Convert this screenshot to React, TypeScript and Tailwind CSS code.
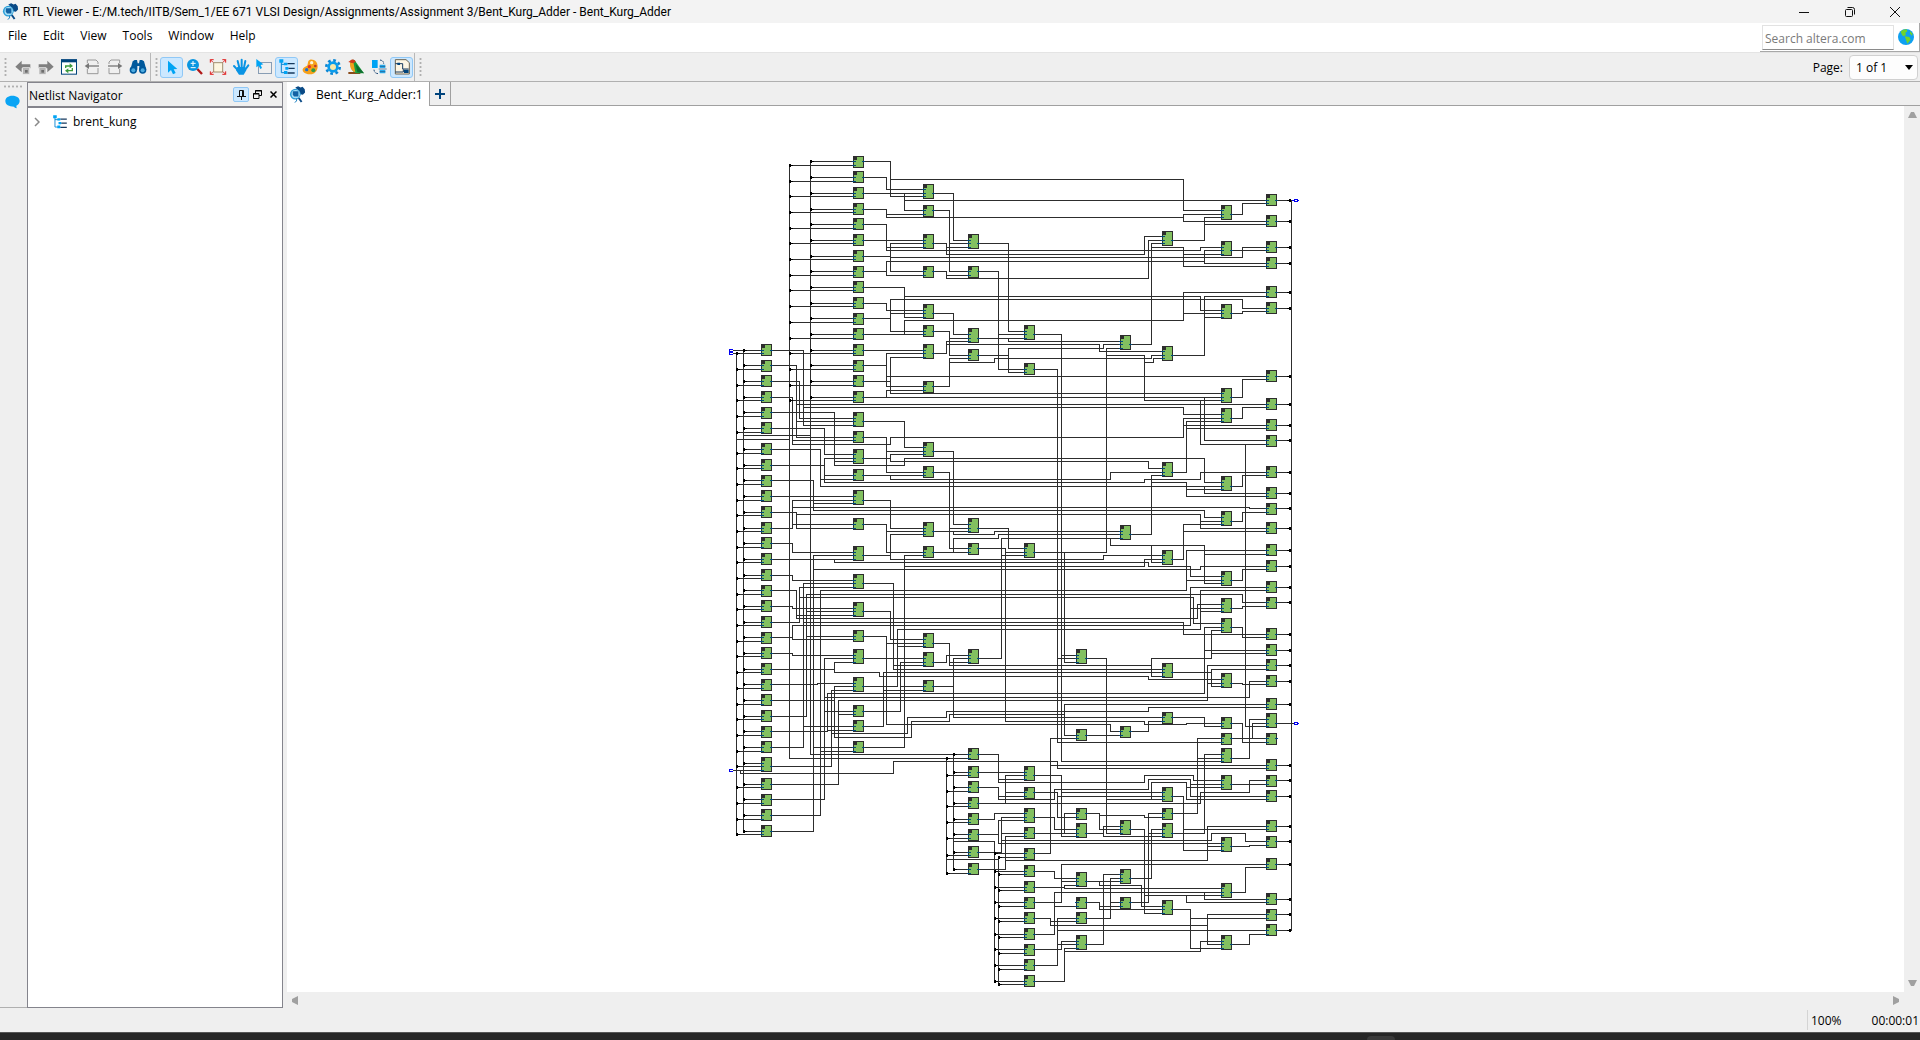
import React from "react";

/* ------------------------------------------------------------------ */
/* Netlist geometry                                                     */
/* Coordinates are in thirds of a pixel, local to a tile of the sheet. */
/* ------------------------------------------------------------------ */

type Tile = { x: number; y: number; wires: string; gates: [number, number[][]][] };

const TILES: Tile[] = [
  {
    x: 0,
    y: 0,
    wires: `M39 631H71 M39 640H50 M71 631V2074 M50 640V2083 M271 64V1843H744 M208 76V1855H744
M431 64H511V169H609 M511 118H900 M431 112H499V148H609 M431 160H609 M553 160V211H609 M553 181H900
M431 208H499V232H900 M499 223H609 M431 253H499V331H900 M499 322H609 M431 301H609 M431 349H511
M511 310V394H609 M511 310H609 M511 352H900 M431 394H499 M499 364V406H609 M499 364H900
M431 442H553V532H609 M553 469H900 M431 490H499V511H609 M431 535H511 M511 478V574H609 M511 478H900
M511 520H609 M431 583H609 M553 583V541H900 M431 631H609 M431 676H499 M499 640H609 M499 640V739H609
M499 709H900 M431 724H511 M511 652H609 M511 652V760H900 M431 772H900 M499 772V751H609
M641 160H701V301H744 M641 211H689V394H744 M689 310H744 M641 310H680V343H900 M680 322H744
M641 394H680V415H900 M680 406H744 M641 520H701V583H744 M641 574H689V646H744 M689 595H744
M641 640H680V604H744 M680 613H900 M641 739H689V655H744 M689 667H824V655H900
M776 310H866V574H900 M776 394H836V688H900 M836 583H900 M776 595H900 M866 595V604H900
M776 646H866 M866 625V697H900 M866 625H900
M155 631H250V856H399 M250 802H900 M155 676H229V892H399 M229 844H399 M229 793H900
M155 724H238V835H399 M155 772H217V913`,
    gates: [
      [123, [[612, 631, 640], [660, 676, 688], [705, 724, 736], [753, 772, 781]]],
      [399, [[48, 64, 76], [93, 112, 124], [141, 160, 169], [189, 208, 217], [234, 253, 265], [282, 301, 310], [330, 349, 358], [378, 394, 406], [423, 442, 451], [471, 490, 499], [519, 535, 547], [564, 583, 595], [612, 631, 640], [660, 676, 688], [705, 724, 736], [753, 772, 781]]],
      [609, [[132, 148, 160, 169], [195, 211, 223], [282, 301, 310, 322], [378, 394, 406], [492, 511, 520, 532], [555, 574, 583], [612, 631, 640, 652], [723, 739, 751]]],
      [744, [[282, 301, 310, 322], [378, 394, 406], [564, 583, 595, 604], [627, 646, 655]]],
    ],
  },
  {
    x: 300,
    y: 0,
    wires: `M814 181V2371 M0 118H490V211H603 M0 181H738 M0 232H490 M490 223H603 M490 223V244H738
M0 331H541V322H603 M0 343H373V289H426 M0 352H667V322H738 M0 364H553 M553 331H603 M553 331V370H738
M0 415H385V301H426 M0 469H541V511H603 M0 478H667V505H738 M0 541H490V457H738 M490 520H603
M0 574H12 M0 583H12 M0 595H12 M0 604H300 M0 613H238V634H426 M0 625H250V613H300 M0 655H394V646H426
M0 709H738 M0 760H603 M0 772H603 M0 793H738 M0 802H490V823H603 M0 688H12 M0 697H12
M44 583H124V1864H603 M44 688H112V1807H603 M332 613H394V310H426 M394 322H490V379H738 M490 343H603
M458 301H553V232H603 M553 253H738 M458 646H553V469H738 M553 532H603 M635 223H667V190H738
M635 331H738 M635 520H667V514H738 M635 772H667V718H738 M635 835H667V802H738
M300 625H259V1237H44 M259 646H373V781H603 M373 667H400V655H426 M541 781V913H738 M553 772V901H738`,
    gates: [
      [12, [[555, 574, 583, 595], [669, 688, 697]]],
      [300, [[585, 604, 613, 625]]],
      [426, [[273, 289, 301, 310], [618, 634, 646, 655]]],
      [603, [[195, 211, 223, 232], [303, 322, 331, 343], [492, 511, 520, 532], [744, 760, 772, 781]]],
      [738, [[162, 181, 190], [225, 244, 253], [303, 322, 331], [351, 370, 379], [438, 457, 469], [486, 505, 514], [690, 709, 718], [774, 793, 802]]],
    ],
  },
  {
    x: 0,
    y: 260,
    wires: `M217 121H399 M217 133H511V112H900 M155 37H343V196H553V175H900 M343 184H399 M155 85H313V163H399
M71 106H271 M50 118H208 M155 148H301V259H900 M301 238H399 M155 196H313 M313 175H399 M313 175V247H900
M313 226H399 M155 241H280V331H900 M280 310H399 M155 289H399 M155 337H229V385H399 M229 343H900
M155 385H217V301H399 M217 322H900 M217 373H399 M155 430H217V457H399 M155 478H399 M343 478V487H900
M155 526H217V541H399 M155 571H229V655H900 M229 646H399 M155 619H217V625H399 M155 667H238V562H399
M238 592H900 M155 712H217 M217 718H399 M217 718V676H900 M155 760H217V766H399
M155 808H343V787H399 M343 808V817H478V829H900 M155 853H292V850H399 M259 634H399 M259 709H399
M250 667H900 M313 892H900 M280 508H900
M431 64H553V142H609 M431 112H499V217H609 M499 154H609 M431 175H511 M511 163H609 M511 163V184H900
M431 226H609 M511 226V238H900 M431 301H511V385H609 M431 373H499V457H609 M499 394H609
M431 466H511 M511 403H609 M511 403V478H900 M431 550H520V808H900 M520 796H609 M431 634H511V718H609
M431 709H499V973H900 M499 730H609 M431 775H609 M431 859H532V688H900 M532 739H609 M553 499H900
M641 154H701V373H744 M641 217H689V445H744 M689 385H744 M641 394H744 M701 394V403H824V394H900
M641 457H744 M701 457V415H836V403H900 M641 730H689V796H900 M689 787H744 M641 787H680V766H744
M641 859H701 M744 775H701V952H900 M776 385H866V445H900 M776 445H857V964H900 M857 457H900
M776 775H845V415H900 M845 466H900`,
    gates: [
      [123, [[21, 37, 49], [66, 85, 97], [129, 148, 160], [177, 196, 205], [225, 241, 253], [270, 289, 301], [318, 337, 346], [366, 385, 394], [411, 430, 442], [459, 478, 487], [507, 526, 535], [555, 571, 583], [600, 619, 628], [648, 667, 676], [696, 712, 724], [741, 760, 769], [789, 808, 817], [837, 853, 865]]],
      [399, [[36, 55, 64, 76], [93, 112, 121], [147, 163, 175, 184], [207, 226, 238], [270, 289, 301, 310], [354, 373, 385], [438, 457, 466, 478], [522, 541, 550, 562], [606, 625, 634, 646], [690, 709, 718], [747, 766, 775, 787], [831, 850, 859, 871]]],
      [609, [[126, 142, 154, 163], [198, 217, 226], [366, 385, 394, 403], [438, 457, 466], [699, 718, 730, 739], [756, 775, 787, 796], [840, 859, 871]]],
      [744, [[354, 373, 385, 394], [429, 445, 457], [747, 766, 775, 787]]],
    ],
  },
  {
    x: 300,
    y: 260,
    wires: `M0 112H490V55H603 M490 76H738 M458 217H499V64H603 M499 85H738
M0 175H553V247H603 M0 184H385V205H426 M0 238H271V217H426 M0 247H373V238H541V217H738 M0 259H603
M553 259V280H738 M0 322H689V325H738 M0 331H553V352H603 M0 343H541V385H738 M541 364H603 M0 394H300
M0 403H300 M0 415H300 M271 415V436H553V550H603 M553 463H738 M394 436V487H426 M332 403H394V226H426
M394 247H499V289H738 M499 268H603 M0 445H12 M0 457H12 M0 466H12 M133 457V787H168 M124 766H168
M112 775H168 M0 478H250V466H426 M0 487H385V499H511V529H603 M0 499H373V478H426 M0 508H541V499H738
M458 478H490V373H603 M490 394H738 M0 571H499V451H738 M499 541H603 M0 583H667V607H738
M0 592H520V670H603 M0 655H532V613H603 M0 667H490V703H738 M0 676H511V562H738 M511 625H603
M0 688H541V571H738 M541 634H603 M635 259H667V226H738 M635 364H667V337H738 M635 541H667V508H738
M635 625H667V619H738 M635 682H667V712H738 M635 850H667V853H738 M201 775H259V1300H300
M0 796H394 M426 829H394V775H574V691H603 M574 760H738 M0 808H426 M0 817H426 M0 829H385V838H603
M458 817H574 M738 808H574V859H603 M0 880H553V682H603 M553 751H738 M0 892H689V844H738
M676 133V979H738`,
    gates: [
      [12, [[429, 445, 457, 466]]],
      [168, [[747, 766, 775, 787]]],
      [300, [[375, 394, 403, 415]]],
      [426, [[186, 205, 217, 226], [450, 466, 478, 487], [789, 808, 817, 829]]],
      [603, [[24, 43, 55, 64], [228, 247, 259, 268], [333, 352, 364, 373], [513, 529, 541, 550], [594, 613, 625, 634], [654, 670, 682, 691], [819, 838, 850, 859]]],
      [738, [[57, 76, 85], [105, 121, 133], [198, 217, 226], [261, 280, 289], [309, 325, 337], [366, 385, 394], [432, 451, 463], [480, 499, 508], [543, 562, 571], [591, 607, 619], [684, 703, 712], [732, 751, 760], [777, 796, 808], [825, 844, 853]]],
    ],
  },
  {
    x: 0,
    y: 520,
    wires: `M155 121H343V79H399 M343 121V232H574V184H689V163H900 M155 169H259V-197H900
M155 214H322V100H900 M322 211H399 M155 262H250V-230H399 M250 199H399 M155 319H334V91H399
M334 220H562V172H680V154H900 M155 373H355V121H900 M355 163H399 M155 418H313V-5H399 M313 154H399
M155 466H301V-209H900 M301 274H399 M155 514H280V-314H399 M280 262H399
M431 154H541V7H609 M541 79H609 M431 199H490V37H900 M490 91H609 M431 262H553V-314H609
M39 331H123 M61 331V340H520V304H900 M701 283V628 M680 295V640 M701 544H824V964 M680 598H836
M836 592V973 M776 283H836V367H900 M836 358H900 M776 337H900 M776 382H836V418H900 M836 409H900
M776 430H900 M857 430V346H900 M857 397H900 M776 478H824V460H900 M776 523H836 M900 481H836V550H900
M776 577H845V472H900 M845 520H900 M845 541H900 M776 628H857V529H900 M857 601H900`,
    gates: [
      [123, [[102, 121, 133], [150, 169, 178], [198, 214, 226], [243, 262, 274], [291, 310, 319, 331], [354, 373, 382], [402, 418, 430], [447, 466, 478], [495, 514, 523]]],
      [399, [[135, 154, 163], [180, 199, 211], [243, 262, 274]]],
      [744, [[264, 283, 295], [318, 337, 346], [363, 382, 394], [411, 430, 439], [459, 478, 487], [507, 523, 535], [558, 577, 586], [609, 628, 640]]],
    ],
  },
  {
    x: 300,
    y: 520,
    wires: `M0 121H562V16H738 M562 70H603 M0 154H385V142H738 M0 163H133 M738 133H133V226H168 M0 172H426
M0 184H373V193H499V190H603 M0 193H271V214H300 M201 226H300 M332 214H385V184H426
M458 172H553V199H603 M635 190H667V247H738 M635 235H738 M697 235V190H738 M635 295H689V178H738
M0 304H112V325H738 M91 316H738 M168 235H91V580H44 M603 235H532V460H458 M532 295H603
M603 283H553V520H458 M0 337H12 M0 346H12 M0 358H12 M0 397H12 M0 409H12 M0 460H12 M0 472H12
M0 481H12 M0 520H12 M0 529H12 M44 346H124V529H168 M124 397H426 M0 367H373V346H520V361H603
M0 418H103V388H385V358H511V409H738 M511 373H603 M0 430H541V397H689V361H738
M44 397H112V472H168 M112 409H426 M394 418V367H499V418H738 M499 382H603 M259 418H426 M635 373H738
M458 409H490V571H603 M490 508H738 M44 472H103V508H168 M44 520H168 M133 520V460H168
M201 460H238V508H300 M238 466H373V472H426 M201 520H250 M300 499H250V529H426
M332 508H373V760H426 M373 706H603 M426 460H385V727H332 M385 520H426 M426 508H394V655H332
M0 541H574V520H676V544H738 M0 550H603 M0 601H562V499H738 M562 559H603 M635 559H689V556H738
M499 706V727H738 M44 634H103V655H168 M738 613H124V727H44 M124 664H168 M44 682H133
M168 676H133V685H603 M603 697H103V823H44 M103 739H168 M553 697V718H738
M44 775H91V796H562 M91 784H168 M738 763H562V853H603 M201 664H300 M238 664V676H364V739H426
M300 643H250V853H201 M300 655H271V775H201 M271 727H300 M201 727H238V748H426 M238 739H300
M168 775H112V916H44 M112 811H738 M112 853H168 M44 868H124V844H168 M44 964H133V865H168
M133 874H541V844H603 M635 697H676V622H738 M458 748H511V865H603 M511 775H738 M635 853H689V823H738
M770 190H822`,
    gates: [
      [12, [[318, 337, 346, 358], [381, 397, 409], [444, 460, 472, 481], [501, 520, 529], [564, 580, 592], [615, 634, 643], [663, 682, 691], [711, 727, 739], [756, 775, 784], [804, 823, 832], [852, 868, 880], [897, 916, 928], [945, 964, 973]]],
      [168, [[207, 226, 235], [444, 460, 472], [489, 508, 520, 529], [636, 655, 664, 676], [711, 727, 739], [756, 775, 784], [825, 844, 853, 865]]],
      [300, [[198, 214, 226], [480, 499, 508, 520], [627, 643, 655, 664], [711, 727, 739]]],
      [426, [[156, 172, 184], [381, 397, 409, 418], [444, 460, 472], [489, 508, 520, 529], [720, 739, 748, 760]]],
      [603, [[171, 190, 199], [219, 235, 247], [264, 283, 295, 304], [345, 361, 373, 382], [531, 550, 559, 571], [669, 685, 697, 706], [825, 844, 853, 865]]],
      [738, [[114, 133, 142], [159, 178, 190, 199], [219, 235, 247], [297, 316, 325], [345, 361, 373], [390, 409, 418], [480, 499, 508], [528, 544, 556], [594, 613, 622], [699, 718, 727], [747, 763, 775], [792, 811, 823]]],
    ],
  },
];

const px = (v: number) => Math.floor(v / 3);

const toPath = (t: Tile) =>
  t.wires.replace(/([MHV])(-?\d+)(?: (\d+))?/g, (_m, c: string, a: string, b?: string) => {
    if (c === "M") return `M${t.x + px(+a) + 0.5} ${t.y + px(+b!) + 0.5}`;
    if (c === "H") return `H${t.x + px(+a) + 0.5}`;
    return `V${t.y + px(+a) + 0.5}`;
  });

type Gate = { x: number; y: number; h: number; ins: number[]; out: number };
type Tap = { bus: number; y: number; to: number };

const gates: Gate[] = [];
const taps: Tap[] = [];
const outTaps: number[] = [];

TILES.forEach((t) =>
  t.gates.forEach(([gx, rows]) =>
    rows.forEach(([top, ...raw]) => {
      const x = t.x + px(gx);
      const y = t.y + px(top);
      const ins = raw.map((v) => t.y + px(v));
      gates.push({ x, y, h: ins.length === 3 ? 15 : 12, ins, out: ins.length === 3 ? ins[1] : ins[0] });
      const feed = (a: number, b: number) => {
        taps.push({ bus: a, y: ins[0], to: x });
        taps.push({ bus: b, y: ins[1], to: x });
      };
      if (x === 41) feed(23, 16);
      if (x === 133 && y < 255) feed(90, 69);
      if (x === 248 && y > 600) feed(233, 226);
      if (x === 304 && y > 705) feed(274, 278);
      if (x === 546 && ins.length === 2 && y !== 593) outTaps.push(ins[0]);
    }),
  ),
);

function Schematic() {
  return (
    <svg width="600" height="850" viewBox="0 0 600 850" shapeRendering="crispEdges" role="img" aria-label="brent_kung schematic">
      {TILES.map((t, i) => (
        <path key={i} d={toPath(t)} fill="none" stroke="#2d2d2d" strokeLinecap="square" />
      ))}
      {taps.map((t, i) => (
        <g key={i}>
          <path d={`M${t.bus} ${t.y + 0.5}H${t.to}`} stroke="#2d2d2d" />
          <path d={`M${t.bus} ${t.y - 1}h2v1h2v1h-2v1h-2z`} fill="#000" />
        </g>
      ))}
      {outTaps.map((y) => (
        <g key={y}>
          <path d={`M557 ${y + 0.5}H571`} stroke="#2d2d2d" />
          <path d={`M567 ${y}h2v-1h2v3h-2v-1h-2z`} fill="#000" />
        </g>
      ))}
      {gates.map((g, i) => (
        <g key={i}>
          <rect x={g.x + 0.5} y={g.y + 0.5} width={10} height={g.h - 1} fill="#82c060" stroke="#2d2d2d" />
          <rect x={g.x} y={g.y} width={4} height={4} fill="#2d2d2d" />
          {g.ins.map((y) => (
            <rect key={y} x={g.x - 1} y={y} width={4} height={1} fill="#004a7c" />
          ))}
          <rect x={g.x + 9} y={g.out} width={3} height={1} fill="#004a7c" />
        </g>
      ))}
      <g fill="none" stroke="#0000f0">
        <path d="M13 209.500H9.500V211.500H13M13 212.500H9.500V214.500H13M9 212H12" />
        <path d="M13 629.500H9.500V631.500H13" />
        <path d="M572 60.500h2M574.500 59.500h3v2h-3zM577 60.500h2" />
        <path d="M574.500 582.500h3v2h-3zM577 583.500h2" />
      </g>
    </svg>
  );
}

/* ------------------------------------------------------------------ */
/* Icons                                                                */
/* ------------------------------------------------------------------ */

const Svg = ({ children, size = 18 }: { children: React.ReactNode; size?: number }) => (
  <svg width={size} height={size} viewBox="0 0 54 54" fill="none" aria-hidden="true" className="shrink-0">
    {children}
  </svg>
);

const AppIcon = () => (
  <Svg size={17}>
    <path d="M20 5 29 1l8 4 6-3 7 8 1 11-7 7-8-2-4-10z" fill="#0a4a86" />
    <circle cx="20" cy="26" r="17" fill="#2a9ed8" />
    <circle cx="21" cy="26" r="13" fill="#a8e0f8" />
    <path d="M12 17h18v16H16l-4-5z" fill="#1263a4" />
    <path d="m31 38 9 13" stroke="#0a4a86" strokeWidth="6" />
    <path d="M24 40v8l-6 4" stroke="#1a7fc0" strokeWidth="3" />
  </Svg>
);

const ArrowGray = ({ flip = false }: { flip?: boolean }) => (
  <Svg>
    <g transform={flip ? "matrix(-1 0 0 1 54 0)" : undefined}>
      <path d="M4 26 23 8v11h26v12H23v12z" fill="#808080" />
    </g>
    <rect x={flip ? 6 : 26} y="29" width="21" height="20" fill="#b4b4b4" stroke="#efefef" strokeWidth="2" />
    <rect x={flip ? 13 : 33} y="36" width="8" height="8" fill="#6e6e6e" />
  </Svg>
);

const Refresh = () => (
  <Svg>
    <rect x="4.500" y="5.500" width="45" height="43" fill="#fff" stroke="#00447c" strokeWidth="3" />
    <path d="M3 4h48v9H3z" fill="#00447c" />
    <path d="M17 30v-6h14M37 30v8H22" stroke="#3c9a3c" strokeWidth="4" />
    <path d="m29 16 10 8-10 7zM25 31l-10 7 10 8z" fill="#3c9a3c" />
  </Svg>
);

const PageArrow = ({ flip = false }: { flip?: boolean }) => (
  <Svg>
    <g transform={flip ? "matrix(-1 0 0 1 54 0)" : undefined}>
      <path d="M13 16V6h26l6 6v6M13 32v15h32V30" stroke="#999" strokeWidth="3" />
      <path d="M14 24h34" stroke="#777" strokeWidth="4" />
      <path d="m5 24 13-9v18z" fill="#777" />
    </g>
  </Svg>
);

const Binoculars = () => (
  <Svg>
    <path d="M11 10 17 6h7l2 10h4l2-10h7l6 4 7 25H31V24h-6v11H4z" fill="#00599c" />
    <circle cx="13" cy="36" r="11" fill="#00599c" />
    <circle cx="41" cy="36" r="11" fill="#00599c" />
    <circle cx="13" cy="37" r="6" fill="#4dabe0" />
    <circle cx="41" cy="37" r="6" fill="#4dabe0" />
  </Svg>
);

const Pointer = () => (
  <Svg>
    <path d="M15 8v36l9-8 6 13 8-4-6-11 11-1z" fill="#00a4f4" />
  </Svg>
);

const ZoomIcon = () => (
  <Svg>
    <path d="m34 33 14 15" stroke="#b01818" strokeWidth="7" />
    <circle cx="21" cy="21" r="18" fill="#0a96e0" />
    <path d="M14 16h15M21 9v15M14 29h15" stroke="#fff" strokeWidth="3" />
  </Svg>
);

const Fit = () => (
  <Svg>
    <rect x="14" y="14" width="27" height="28" fill="#fdf6e0" stroke="#a09070" strokeWidth="3" />
    <path d="m4 5 8 8M50 5l-8 8M4 49l8-8M50 49l-8-8" stroke="#e02020" strokeWidth="3" />
    <path d="M4 14V5h10M40 5h10v9M4 40v9h10M40 49h10v-9" stroke="#e02020" strokeWidth="3" />
  </Svg>
);

const Hand = () => (
  <Svg>
    <path d="m6 24 12 13M17 9l5 20M29 5v22M40 9l-4 20M49 22 39 36" stroke="#0a94e4" strokeWidth="6" strokeLinecap="round" />
    <path d="M16 27h24l3 10-8 13H21l-9-13z" fill="#0a94e4" />
  </Svg>
);

const SelectArea = () => (
  <Svg>
    <rect x="10.500" y="13.500" width="39" height="33" stroke="#204a78" strokeWidth="3" strokeDasharray="3 3" />
    <path d="M4 3v25l7-5 5 10 5-3-4-9 8-2z" fill="#00a4f4" />
  </Svg>
);

const Tree = ({ size = 18 }: { size?: number }) => (
  <Svg size={size}>
    <path d="M10 10v34h14M10 19h14" stroke="#0a84d0" strokeWidth="3" />
    <path d="M28 17h22M31 31h19M28 45h22" stroke="#16395e" strokeWidth="4" />
    <path d="M4 4h12v10H4zM18 14h10v8H18zM22 27h9v8h-9zM18 39h10v9H18z" fill="#00a4f4" />
  </Svg>
);

const Palette = () => (
  <Svg>
    <path d="M27 5C41 3 51 13 50 27 49 41 39 50 26 49 12 49 4 42 5 34c1-6 8-8 13-11 4-4 1-16 9-18z" fill="#f7a11a" />
    <circle cx="32" cy="14" r="5" fill="#fff4d8" />
    <circle cx="43" cy="24" r="4" fill="#c0392b" />
    <circle cx="37" cy="37" r="6" fill="#2e9b48" />
    <circle cx="17" cy="35" r="5" fill="#1c6fd0" />
    <circle cx="25" cy="26" r="5" fill="#e03030" />
  </Svg>
);

const Gear = () => (
  <Svg>
    <circle cx="27" cy="27" r="20" stroke="#0a86d4" strokeWidth="8" strokeDasharray="8 7.700" />
    <circle cx="27" cy="27" r="17" fill="#0a9cec" />
    <circle cx="27" cy="27" r="9" fill="#f9e8a8" />
  </Svg>
);

const Bird = () => (
  <Svg>
    <path d="M4 42h36v6H4z" fill="#8a4a1a" />
    <path d="M10 12c0-8 13-9 16-1l25 35H28C14 40 10 28 10 12z" fill="#1c9c3c" />
    <path d="M9 14c0 14 3 24 16 29l-6-31z" fill="#f4a01c" />
    <path d="m4 12 8-6c7-3 13 0 14 6l-8 4z" fill="#d43a1c" />
    <path d="m26 18 25 28-20-4z" fill="#0e6c30" />
  </Svg>
);

const Sync = () => (
  <Svg>
    <path d="M6 6h17v24H6z" fill="#00a4f4" />
    <path d="M29 20h17v10H29zM29 36h17v10H29z" fill="#2aaef0" />
    <path d="M29 25h17M29 41h17M26 33h24" stroke="#204a78" strokeWidth="2" />
    <path d="M30 6c7 1 11 4 11 11M24 47c-8-1-12-5-12-12" stroke="#204a78" strokeWidth="3" strokeDasharray="5 2" />
  </Svg>
);

const Circuit = () => (
  <Svg>
    <path d="M7 5h32l10 9v34H7z" fill="#fdf6e4" stroke="#6e6450" strokeWidth="3" />
    <path d="M7 17h22v16h18M7 42h24v-8" stroke="#16395e" strokeWidth="3" />
    <path d="M33 35h14v10H33zM13 14h8v7h-8z" fill="#00447c" />
  </Svg>
);

const Grip = () => (
  <span aria-hidden="true" className="mr-[2px] ml-1 h-5 w-[3px] shrink-0 bg-[radial-gradient(circle,#b0b0b0_1px,transparent_1.200px)] bg-[length:3px_4px]" />
);

type Tool = { label: string; icon: React.ReactNode; on?: boolean };

const EDIT_TOOLS: Tool[] = [
  { label: "Back", icon: <ArrowGray /> },
  { label: "Forward", icon: <ArrowGray flip /> },
  { label: "Refresh", icon: <Refresh /> },
  { label: "Previous page", icon: <PageArrow /> },
  { label: "Next page", icon: <PageArrow flip /> },
  { label: "Find", icon: <Binoculars /> },
];

const VIEW_TOOLS: Tool[] = [
  { label: "Selection tool", icon: <Pointer />, on: true },
  { label: "Zoom tool", icon: <ZoomIcon /> },
  { label: "Fit in window", icon: <Fit /> },
  { label: "Hand tool", icon: <Hand /> },
  { label: "Area selection", icon: <SelectArea /> },
  { label: "Netlist navigator", icon: <Tree />, on: true },
  { label: "Color settings", icon: <Palette /> },
  { label: "Display settings", icon: <Gear /> },
  { label: "Bird's eye view", icon: <Bird /> },
  { label: "Swap", icon: <Sync /> },
  { label: "Show netlist", icon: <Circuit />, on: true },
];

const ToolButton = ({ label, icon, on }: Tool) => (
  <button
    aria-label={label}
    title={label}
    className={
      on
        ? "flex h-[21px] w-[23px] items-center justify-center rounded-[3px] border border-[#90c8f6] bg-[#cce8ff]"
        : "flex h-[21px] w-[23px] items-center justify-center"
    }
  >
    {icon}
  </button>
);

/* ------------------------------------------------------------------ */
/* Page                                                                 */
/* ------------------------------------------------------------------ */

export default function App() {
  return (
    <div className="flex h-screen flex-col overflow-hidden bg-[#efefef] font-['Open_Sans','Noto_Sans',sans-serif] text-xs text-black">
      <header className="flex h-[23px] shrink-0 items-center bg-[#f3f3f3] pl-[2px]">
        <AppIcon />
        <h1 className="ml-1 font-[Roboto,sans-serif] whitespace-nowrap">
          RTL Viewer - E:/M.tech/IITB/Sem_1/EE 671 VLSI Design/Assignments/Assignment 3/Bent_Kurg_Adder - Bent_Kurg_Adder
        </h1>
        <div className="ml-auto flex h-full pr-px">
          <button aria-label="Minimize" className="flex w-[46px] items-center justify-center">
            <svg width="10" height="10" viewBox="0 0 10 10" stroke="#111"><path d="M0 5.500h10" /></svg>
          </button>
          <button aria-label="Restore" className="flex w-[46px] items-center justify-center">
            <svg width="10" height="10" viewBox="0 0 10 10" stroke="#111" fill="none"><rect x=".5" y="2.500" width="7" height="7" rx="1" /><path d="M2.500 .5h5a2 2 0 0 1 2 2v5" /></svg>
          </button>
          <button aria-label="Close" className="flex w-[46px] items-center justify-center pr-[2px]">
            <svg width="10" height="10" viewBox="0 0 10 10" stroke="#111"><path d="m0 0 10 10M10 0 0 10" /></svg>
          </button>
        </div>
      </header>

      <div className="flex h-[30px] shrink-0 items-stretch border-b border-[#e4e4e4] bg-white">
        <nav className="flex items-center gap-4 pb-[3px] pl-2">
          {["File", "Edit", "View", "Tools", "Window", "Help"].map((m) => (
            <button key={m}>{m}</button>
          ))}
        </nav>
        <div className="ml-auto flex w-40 items-center border-r border-b border-[#a8a8a8] pl-[2px]">
          <input
            aria-label="Search altera.com"
            placeholder="Search altera.com"
            className="h-[25px] w-[132px] border border-[#e2e2e2] border-b-[#8a8a8a] bg-white px-[2px] pt-[3px] outline-none placeholder:text-[#7a7a7a]"
          />
          <button aria-label="Go" className="ml-1">
            <svg width="16" height="16" viewBox="0 0 48 48">
              <circle cx="24" cy="24" r="24" fill="#0fa0f0" />
              <path d="M8 8c6-6 14-8 18-7l2 6-6 5 2 6-8 4-4-4zM20 22l14 2 4 8-10 12-4-12zM36 6l8 8-2 6-6-6z" fill="#6fd42c" />
            </svg>
          </button>
        </div>
      </div>

      <div className="flex h-[29px] shrink-0 items-center border-b border-[#b0b0b0]">
        <Grip />
        <div className="flex pl-[2px]">{EDIT_TOOLS.map((t) => <ToolButton key={t.label} {...t} />)}</div>
        <span className="ml-px h-full w-px bg-[#b8b8b8]" />
        <Grip />
        <div className="flex">{VIEW_TOOLS.map((t) => <ToolButton key={t.label} {...t} />)}</div>
        <span className="ml-px h-full w-px bg-[#b8b8b8]" />
        <Grip />
        <label htmlFor="page" className="ml-auto mr-[6px] pt-px">Page:</label>
        <div className="relative mr-[2px]">
          <select id="page" className="h-[25px] w-[69px] appearance-none rounded-[4px] border border-[#d0d0d0] bg-[#fdfdfd] pt-px pl-[6px]">
            <option>1 of 1</option>
          </select>
          <svg width="8" height="5" viewBox="0 0 8 5" className="pointer-events-none absolute top-[10px] right-[5px]"><path d="M0 0h8L4 5z" /></svg>
        </div>
      </div>

      <div className="flex min-h-0 flex-1">
        <div className="flex w-[27px] shrink-0 flex-col items-center border-b border-[#b0b0b0] pt-[3px] pr-[2px]">
          <span aria-hidden="true" className="h-[3px] w-5 bg-[radial-gradient(circle,#b0b0b0_1px,transparent_1.200px)] bg-[length:4px_3px]" />
          <button aria-label="Messages" className="mt-[7px]">
            <svg width="15" height="14" viewBox="0 0 45 42"><path d="M22 2C36 2 44 9 44 18c0 7-5 12-10 14l1 8c-4-1-7-3-8-5C12 35 1 29 1 18 1 9 9 2 22 2z" fill="#0aa4f4" /></svg>
          </button>
        </div>

        <aside className="flex w-64 shrink-0 flex-col border border-[#84848c] bg-white">
          <div className="flex h-[25px] shrink-0 items-center border-b-2 border-[#84848c] bg-[#efefef] pl-px">
            <h2 className="pt-[3px]">Netlist Navigator</h2>
            <button aria-label="Pin" className="ml-auto flex h-[15px] w-4 items-center justify-center rounded-[2px] border border-[#90c8f6] bg-[#cce8ff]">
              <svg width="9" height="10" viewBox="0 0 9 10" fill="none" stroke="#111"><path d="M2.500 6V.5h4V6M5.500 0v6M0 6.500h9M4.500 7v3" /></svg>
            </button>
            <button aria-label="Float" className="ml-px flex w-[15px] justify-center">
              <svg width="9" height="9" viewBox="0 0 9 9" fill="none" stroke="#000"><path d="M2.500 3V.5h6v5H6M2 1h7M.5 3.500h5.500v5H.5zM0 4h6" /></svg>
            </button>
            <button aria-label="Close panel" className="mx-[1px] flex w-[15px] justify-center">
              <svg width="7" height="7" viewBox="0 0 7 7" stroke="#000" strokeWidth="1.500"><path d="m.5.5 6 6M6.500.5l-6 6" /></svg>
            </button>
          </div>
          <button className="flex h-[27px] items-center pl-[6px]">
            <svg width="6" height="10" viewBox="0 0 6 10" fill="none" stroke="#888" strokeWidth="1.500"><path d="m1 1 4 4-4 4" /></svg>
            <span className="ml-3"><Tree size={16} /></span>
            <span className="ml-[5px]">brent_kung</span>
          </button>
        </aside>

        <main className="ml-1 flex min-w-0 flex-1 flex-col">
          <div className="flex h-6 shrink-0 items-stretch">
            <button className="flex w-[143px] items-center border-r border-[#a0a0a0] bg-white pl-[2px]">
              <AppIcon />
              <span className="ml-[10px] pt-px whitespace-nowrap">Bent_Kurg_Adder:1</span>
            </button>
            <button aria-label="New tab" className="flex w-[21px] items-center justify-center border-r border-b border-[#a0a0a0]">
              <svg width="10" height="10" viewBox="0 0 10 10" stroke="#00447c" strokeWidth="2"><path d="M0 5h10M5 0v10" /></svg>
            </button>
            <span className="flex-1 border-b border-[#a0a0a0]" />
          </div>
          <div className="flex min-h-0 flex-1">
            <div className="min-w-0 flex-1 overflow-hidden bg-white pt-[34px] pl-[433px]">
              <Schematic />
            </div>
            <div className="flex w-4 shrink-0 flex-col items-center justify-between py-[6px]">
              <button aria-label="Scroll up" className="block"><svg width="9" height="6" viewBox="0 0 9 6" className="block"><path d="M0 6h9L6 0H3z" fill="#a0a0a0" /></svg></button>
              <button aria-label="Scroll down" className="block"><svg width="9" height="6" viewBox="0 0 9 6" className="block"><path d="M0 0h9L6 6H3z" fill="#a0a0a0" /></svg></button>
            </div>
          </div>
          <div className="mr-4 flex h-4 shrink-0 items-center justify-between px-[5px]">
            <button aria-label="Scroll left"><svg width="6" height="9" viewBox="0 0 6 9" className="block"><path d="M6 0v9L0 6V3z" fill="#a0a0a0" /></svg></button>
            <button aria-label="Scroll right"><svg width="6" height="9" viewBox="0 0 6 9" className="block"><path d="M0 0v9l6-3V3z" fill="#a0a0a0" /></svg></button>
          </div>
        </main>
      </div>

      <footer className="flex h-6 shrink-0 items-center justify-end pr-px">
        <span className="h-5 w-px bg-[#d4d4d4]" />
        <span className="ml-[3px] w-[47px] pt-px">100%</span>
        <span className="w-[61px] pt-px text-right">00:00:01</span>
      </footer>
      <div className="flex h-2 shrink-0 justify-center border-t border-[#555] bg-[#262626]">
        <span className="mt-[3px] ml-[842px] h-1 w-7 rounded-t bg-[#3a3a3a]" />
      </div>
    </div>
  );
}
